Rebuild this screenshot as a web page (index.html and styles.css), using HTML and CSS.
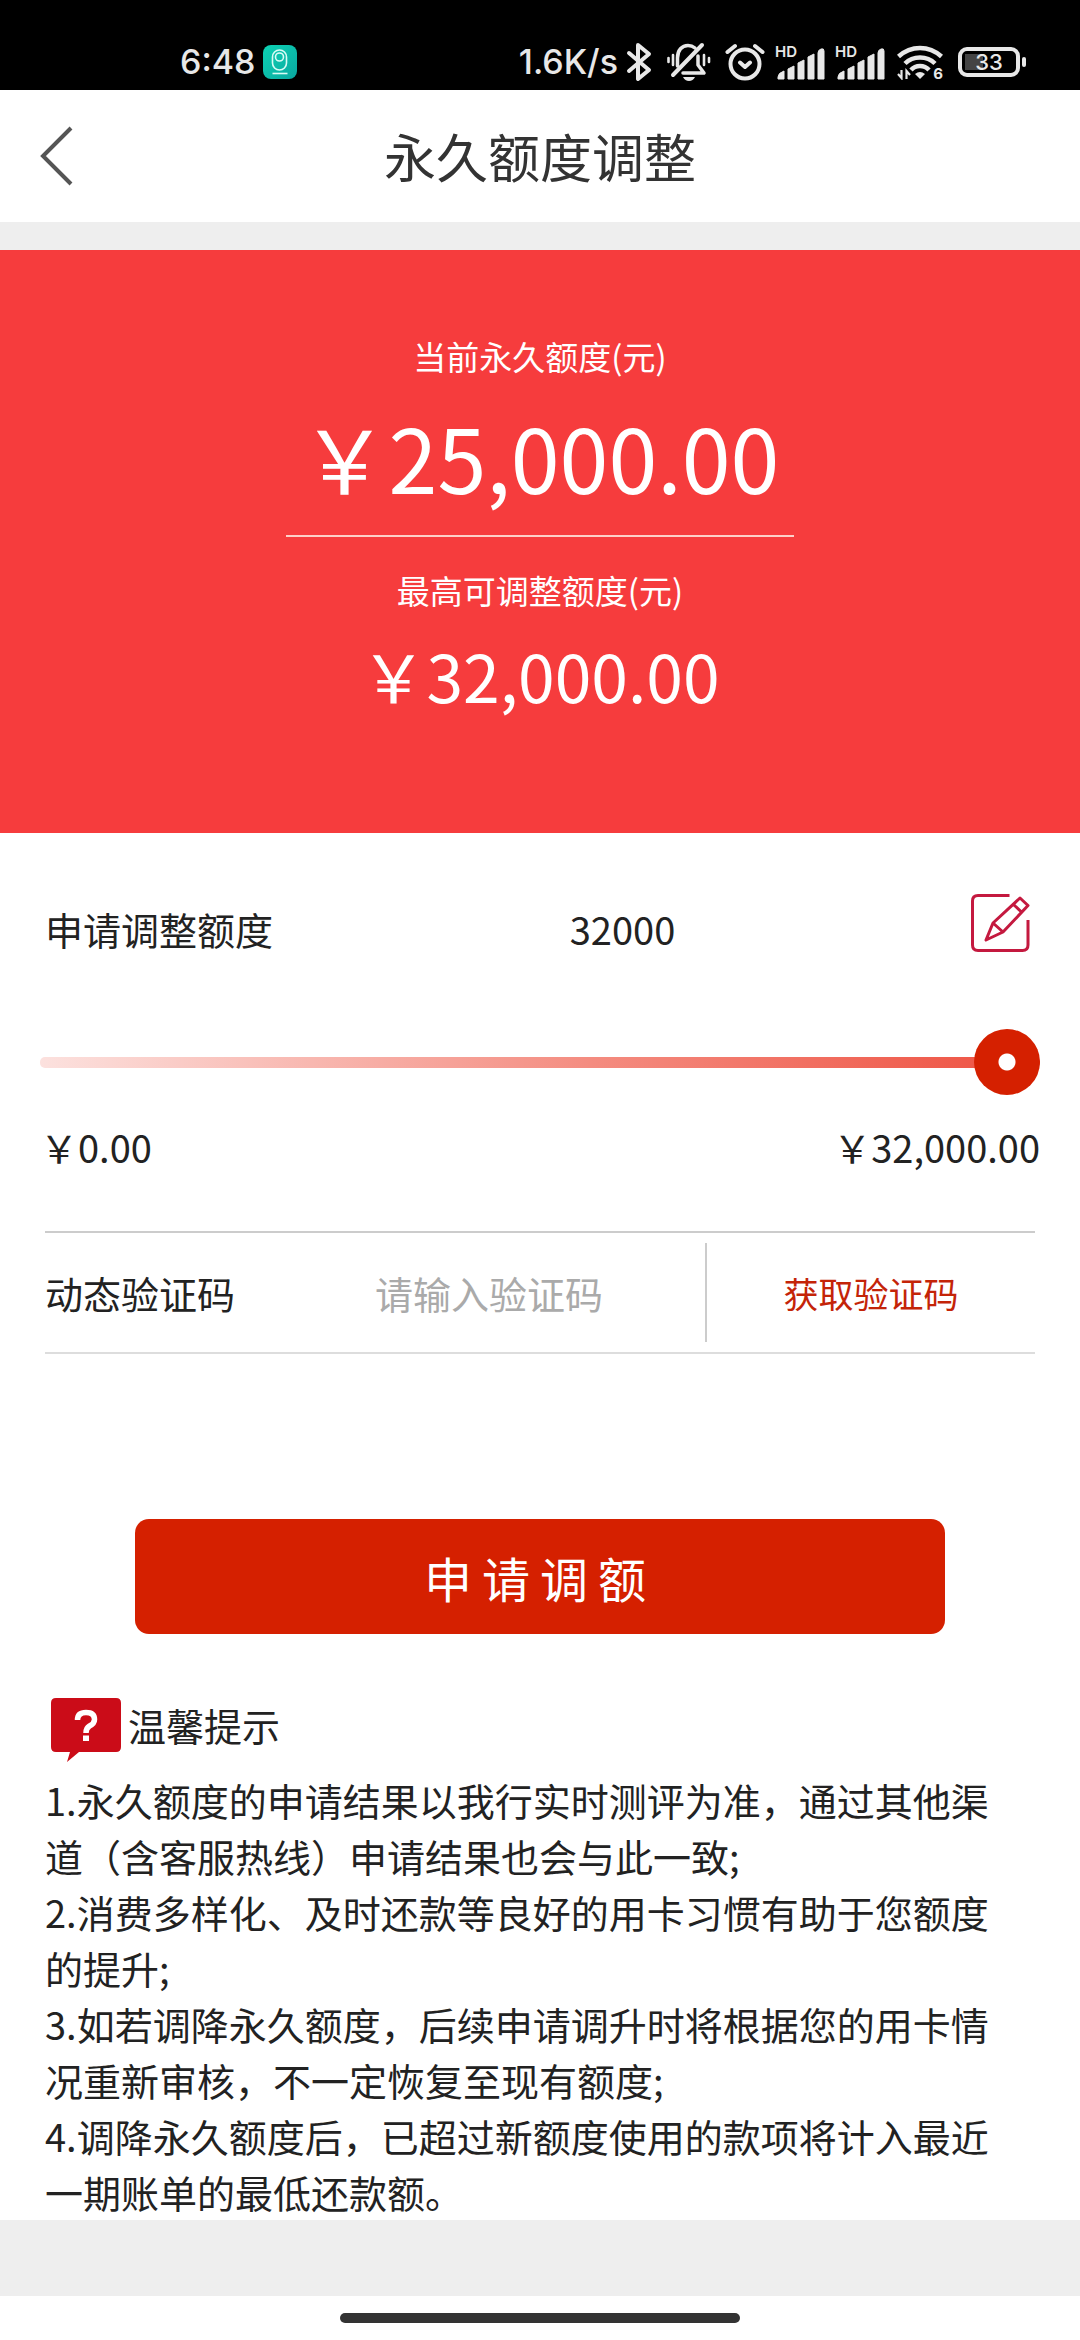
FILE: index.html
```html
<!DOCTYPE html>
<html lang="zh-CN">
<head>
<meta charset="utf-8">
<meta name="viewport" content="width=device-width, initial-scale=1">
<title>永久额度调整</title>
<link rel="stylesheet" href="styles.css">
</head>
<body>
<div class="status">
  <span class="status-text">6:48</span>
  <svg class="status-app" width="34" height="34" viewBox="0 0 34 34" aria-hidden="true">
    <defs><linearGradient id="appFill" x1="0" y1="0" x2="1" y2="1"><stop offset="0" stop-color="#0cd3b4"/><stop offset="1" stop-color="#0aa7a0"/></linearGradient></defs>
    <rect width="34" height="34" rx="8" fill="url(#appFill)"/>
    <g fill="none" stroke="#d8fbf5" stroke-width="1.6"><rect x="9.5" y="5" width="14" height="20" rx="7"/><circle cx="16.5" cy="12" r="4"/><path d="M9.5 28.5h15"/></g>
  </svg>
  <span class="status-text status-speed">1.6K/s</span>
  <svg class="icon-bt" width="26" height="40" viewBox="0 0 26 40" aria-hidden="true"><path d="M3 11l20 17-11 9V3l11 9L3 29" fill="none" stroke="#e8e8e8" stroke-width="4" stroke-linejoin="round" stroke-linecap="round"/></svg>
  <svg class="icon-bell" width="46" height="40" viewBox="0 0 46 40" aria-hidden="true">
    <g fill="none" stroke="#e8e8e8" stroke-width="3.5" stroke-linecap="round" stroke-linejoin="round">
      <path d="M11.5 24V16C11.5 8 16 3.500 22 3.500q4 0 7 2.500M32 14v9l6 8H17"/><path d="M36 3L7 33" stroke-width="4"/>
      <path d="M2.500 16v4M7 13v10M38 13v10M43 16v4" stroke-width="2.6"/>
    </g>
    <path d="M17 35h12q-2 4-6 4t-6-4z" fill="#e8e8e8"/>
  </svg>
  <svg class="icon-alarm" width="40" height="38" viewBox="0 0 40 38" aria-hidden="true"><g fill="none" stroke="#e8e8e8" stroke-width="4" stroke-linecap="round" stroke-linejoin="round"><circle cx="20" cy="21" r="14.5"/><path d="M2.500 9L10 3M37.500 9L30 3M15 19.500l5 4.500 5-4.500"/></g></svg>
  <span class="signal"><span class="signal-hd">HD</span>
    <svg width="48" height="32" viewBox="0 0 48 32" aria-hidden="true"><path d="M1 31v-2q0-4 6-6v8zM11 31V21l6-3v13zM21 31V15l6-3v19zM31 31V9l6-3v25zM41 31V5q0-3 3-4 3-1 3 2v28z" fill="#e8e8e8" stroke="#e8e8e8" stroke-linejoin="round"/></svg>
  </span>
  <span class="signal"><span class="signal-hd">HD</span>
    <svg width="48" height="32" viewBox="0 0 48 32" aria-hidden="true"><path d="M1 31v-2q0-4 6-6v8zM11 31V21l6-3v13zM21 31V15l6-3v19zM31 31V9l6-3v25zM41 31V5q0-3 3-4 3-1 3 2v28z" fill="#e8e8e8" stroke="#e8e8e8" stroke-linejoin="round"/></svg>
  </span>
  <span class="wifi">
    <svg width="46" height="36" viewBox="0 0 46 36" aria-hidden="true">
      <g fill="none" stroke="#e8e8e8" stroke-width="4.5"><path d="M1.500 12.500Q11 4 23 4t21.500 8.500M8 19.500Q14 13.500 23 13.500t15 6M14 26q3.500-4 9-4t9 4"/></g>
      <path d="M18 30q5-4 10 0l-5 5z" fill="#e8e8e8"/>
      <path d="M4.500 26v8l-3.500-4M9.500 35v-8l3.500 4" fill="none" stroke="#e8e8e8" stroke-width="2.2"/>
    </svg>
    <span class="wifi-gen">6</span>
  </span>
  <span class="battery"><span class="battery-level">33</span></span>
</div>

<header class="bar">
  <button class="back" type="button" aria-label="返回"><svg width="36" height="64" viewBox="0 0 36 64"><path d="M33 4L5 32l28 28" fill="none" stroke="#555" stroke-width="4"/></svg></button>
  <h1 class="title">永久额度调整</h1>
</header>

<section class="limits">
  <p class="limits-label">当前永久额度(元)</p>
  <p class="limits-now">￥25,000.00</p>
  <hr class="limits-rule">
  <p class="limits-label">最高可调整额度(元)</p>
  <p class="limits-max">￥32,000.00</p>
</section>

<main>
  <form class="form">
    <div class="amount">
      <label for="amount">申请调整额度</label>
      <input id="amount" class="amount-input" type="text" inputmode="numeric" value="32000">
      <button class="edit" type="button" aria-label="编辑额度">
        <svg width="60" height="60" viewBox="0 0 60 60"><g fill="none" stroke="#c4193f" stroke-width="3" stroke-linejoin="round"><path d="M39.500 2.500H8Q2.500 2.500 2.500 8v44q0 5.500 5.500 5.500h44.500q5.500 0 5.500-5.500V27"/><path d="M16 47l7-17L50 5l8 7.500-25 26.500zM23 30l10 9M43.500 11.500l8 7.500"/></g></svg>
      </button>
    </div>
    <input class="slider" type="range" min="0" max="32000" value="32000" aria-label="调整额度">
    <div class="range"><span>￥0.00</span><span>￥32,000.00</span></div>
    <div class="code">
      <label for="code">动态验证码</label>
      <input id="code" class="code-input" type="text" placeholder="请输入验证码">
      <button class="code-get" type="button">获取验证码</button>
    </div>
    <button class="submit" type="submit">申请调额</button>
  </form>

  <section class="tips">
    <h2 class="tips-head">
      <svg width="72" height="66" viewBox="0 0 72 66" aria-hidden="true"><path d="M6 1h60q5 0 5 5v44q0 5-5 5H29L17 65l3-10H6q-5 0-5-5V6q0-5 5-5z" fill="#cb0c18"/><path d="M27.500 23q0-7.500 8.500-7.500t8.500 7q0 4-5 6.500-3.500 2-3.500 7" fill="none" stroke="#fff" stroke-width="5.5"/><path d="M33 38.500h6V44h-6z" fill="#fff"/></svg>
      <span>温馨提示</span>
    </h2>
    <p>1.永久额度的申请结果以我行实时测评为准，通过其他渠道（含客服热线）申请结果也会与此一致;</p>
    <p>2.消费多样化、及时还款等良好的用卡习惯有助于您额度的提升;</p>
    <p>3.如若调降永久额度，后续申请调升时将根据您的用卡情况重新审核，不一定恢复至现有额度;</p>
    <p>4.调降永久额度后，已超过新额度使用的款项将计入最近一期账单的最低还款额。</p>
  </section>
</main>
<div class="spacer"></div>
<div class="home"><span class="home-bar"></span></div>
</body>
</html>
```
FILE: styles.css
```css
* { box-sizing: border-box; }

body {
  margin: 0;
  background: #fff;
  color: #222;
  font-family: "Noto Sans CJK SC", sans-serif;
  font-size: 38px;
  line-height: 48px;
}

h1, h2, p { margin: 0; font-weight: 400; }

button, input {
  margin: 0;
  padding: 0;
  border: 0;
  background: none;
  color: inherit;
  font: inherit;
}

svg { display: block; flex: none; }

/* System status bar */
.status {
  display: flex;
  align-items: center;
  height: 90px;
  padding: 34px 60px 0 180px;
  background: #000;
  color: #e8e8e8;
  font-family: Inter, sans-serif;
}
.status-text { font-size: 34px; font-weight: 500; line-height: 40px; }
.status-app { margin-left: 8px; }
.status-speed { margin-left: auto; }
.icon-bt { margin-left: 8px; }
.icon-bell { margin-left: 14px; }
.icon-alarm { margin-left: 13px; }
.signal { position: relative; margin-left: 12px; padding-top: 3px; }
.signal-hd {
  position: absolute;
  top: 1px;
  left: -2px;
  font-size: 15px;
  font-weight: 600;
  line-height: 12px;
}
.wifi { position: relative; margin-left: 12px; }
.wifi-gen {
  position: absolute;
  right: 0;
  bottom: 0;
  font-size: 15px;
  font-weight: 700;
  line-height: 12px;
  background: #000;
}
.battery {
  position: relative;
  width: 62px;
  height: 30px;
  margin-left: 15px;
  border: 4px solid #e8e8e8;
  border-radius: 9px;
  background: linear-gradient(90deg, #444 18px, transparent 18px) 3px 3px / 46px 16px no-repeat;
}
.battery::after {
  content: "";
  position: absolute;
  top: 6px;
  right: -10px;
  width: 4px;
  height: 10px;
  border-radius: 2px;
  background: #e8e8e8;
}
.battery-level {
  display: block;
  font-size: 22px;
  font-weight: 500;
  line-height: 22px;
  text-align: center;
}

/* Title bar */
.bar {
  display: grid;
  grid-template-columns: 100px 1fr 100px;
  align-items: center;
  height: 160px;
  border-bottom: 28px solid #eee;
}
.back { justify-self: start; padding-left: 38px; }
.title {
  color: #333;
  font-size: 52px;
  line-height: 72px;
  text-align: center;
}

/* Current and maximum limits */
.limits {
  padding: 82px 0 111px;
  background: #f63c3d;
  color: #fff;
  text-align: center;
}
.limits-label { font-size: 33px; }
.limits-now { margin-top: 12px; font-size: 88px; line-height: 128px; }
.limits-rule {
  width: 47%;
  height: 2px;
  margin: 15px auto 29px;
  border: 0;
  background: #fdd0c8;
}
.limits-max { margin-top: 12px; font-size: 66px; line-height: 96px; }

/* Request form */
.form { padding: 60px 45px 0; }
.amount {
  display: grid;
  grid-template-columns: 2fr 3fr 1fr;
  align-items: end;
}
.amount-input {
  width: 100%;
  height: 48px;
  text-align: center;
}
.edit { justify-self: end; padding-right: 5px; }

.slider {
  display: block;
  appearance: none;
  width: calc(100% + 10px);
  height: 66px;
  margin: 76px -5px 28px;
}
.slider::-webkit-slider-runnable-track {
  height: 11px;
  border-radius: 5px;
  background: linear-gradient(90deg, #fce1de, #f48c80 55%, #ee5040);
}
.slider::-webkit-slider-thumb {
  appearance: none;
  width: 66px;
  height: 66px;
  margin-top: -28px;
  border-radius: 50%;
  background: radial-gradient(circle, #fff 8px, #d52000 9px);
}

.range {
  display: flex;
  justify-content: space-between;
  margin: 0 -5px 60px;
}

.code {
  display: grid;
  grid-template-columns: repeat(3, 1fr);
  align-items: center;
  height: 123px;
  border-top: 2px solid #ccc;
  border-bottom: 2px solid #ddd;
}
.code-input { width: 100%; height: 48px; }
.code-input::placeholder { color: #aaa; opacity: 1; }
.code-get {
  align-self: stretch;
  margin: 10px 0;
  border-left: 2px solid #ccc;
  color: #c42408;
  font-size: 35px;
}

.submit {
  display: block;
  width: 75vw;
  height: 115px;
  margin: 165px auto 0;
  border-radius: 14px;
  background: #d52000;
  color: #fff;
  font-size: 48px;
  letter-spacing: 10px;
}

/* Tips */
.tips { padding: 63px 60px 0 45px; line-height: 56px; }
.tips-head {
  display: flex;
  gap: 6px;
  margin-bottom: 9px;
  padding-left: 5px;
  font-size: 38px;
}

.spacer { height: 76px; background: #eee; }
.home { display: flex; justify-content: center; padding: 17px 0; }
.home-bar { width: 37%; height: 10px; border-radius: 5px; background: #333; }
```
